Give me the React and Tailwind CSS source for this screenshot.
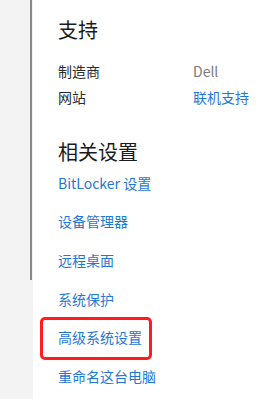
const font = {
  fontFamily: '"Noto Sans CJK SC", "Microsoft YaHei", sans-serif',
};

const links = [
  "BitLocker 设置",
  "设备管理器",
  "远程桌面",
  "系统保护",
  "高级系统设置",
  "重命名这台电脑",
];

const App = () => {
  return (
    <div
      className="flex w-[273px] h-[399px] overflow-hidden bg-white font-['Noto_Sans_CJK_SC',sans-serif]"
    >
      {/* left pane + scrollbar */}
      <div className="w-[33px] shrink-0 bg-[#f3f3f3] flex justify-end pr-[1px]">
        <div className="w-[2px] h-[280px] bg-[#8a8a8a]" />
      </div>

      <div className="flex flex-col pl-[25px] grow">
        <h2 className="mt-[18px] text-[20px] leading-[24px] text-[#1b1b1b]">
          支持
        </h2>

        <div className="mt-[16px] flex flex-col text-[14px]">
          <div className="flex h-[26px] items-center">
            <span className="w-[135px] text-[#2b2b2b]">制造商</span>
            <span className="text-[#7a7a7a]">Dell</span>
          </div>
          <div className="flex h-[26px] items-center">
            <span className="w-[135px] text-[#2b2b2b]">网站</span>
            <span className="text-[#1f78d6]">联机支持</span>
          </div>
        </div>

        <h2 className="mt-[30px] text-[20px] leading-[24px] text-[#1b1b1b]">
          相关设置
        </h2>

        <div className="flex flex-col text-[14px] text-[#1f78d6]">
          {links.map((label) => (
            <div key={label} className="relative flex h-[38.6px] items-center">
              <span>{label}</span>
              {label === "高级系统设置" && (
                <div className="absolute left-[-18px] top-[-1px] w-[112px] h-[43px] border-[3px] border-[#ff1c1c] rounded-[5px]" />
              )}
            </div>
          ))}
        </div>
      </div>
    </div>
  );
};

export default App;
